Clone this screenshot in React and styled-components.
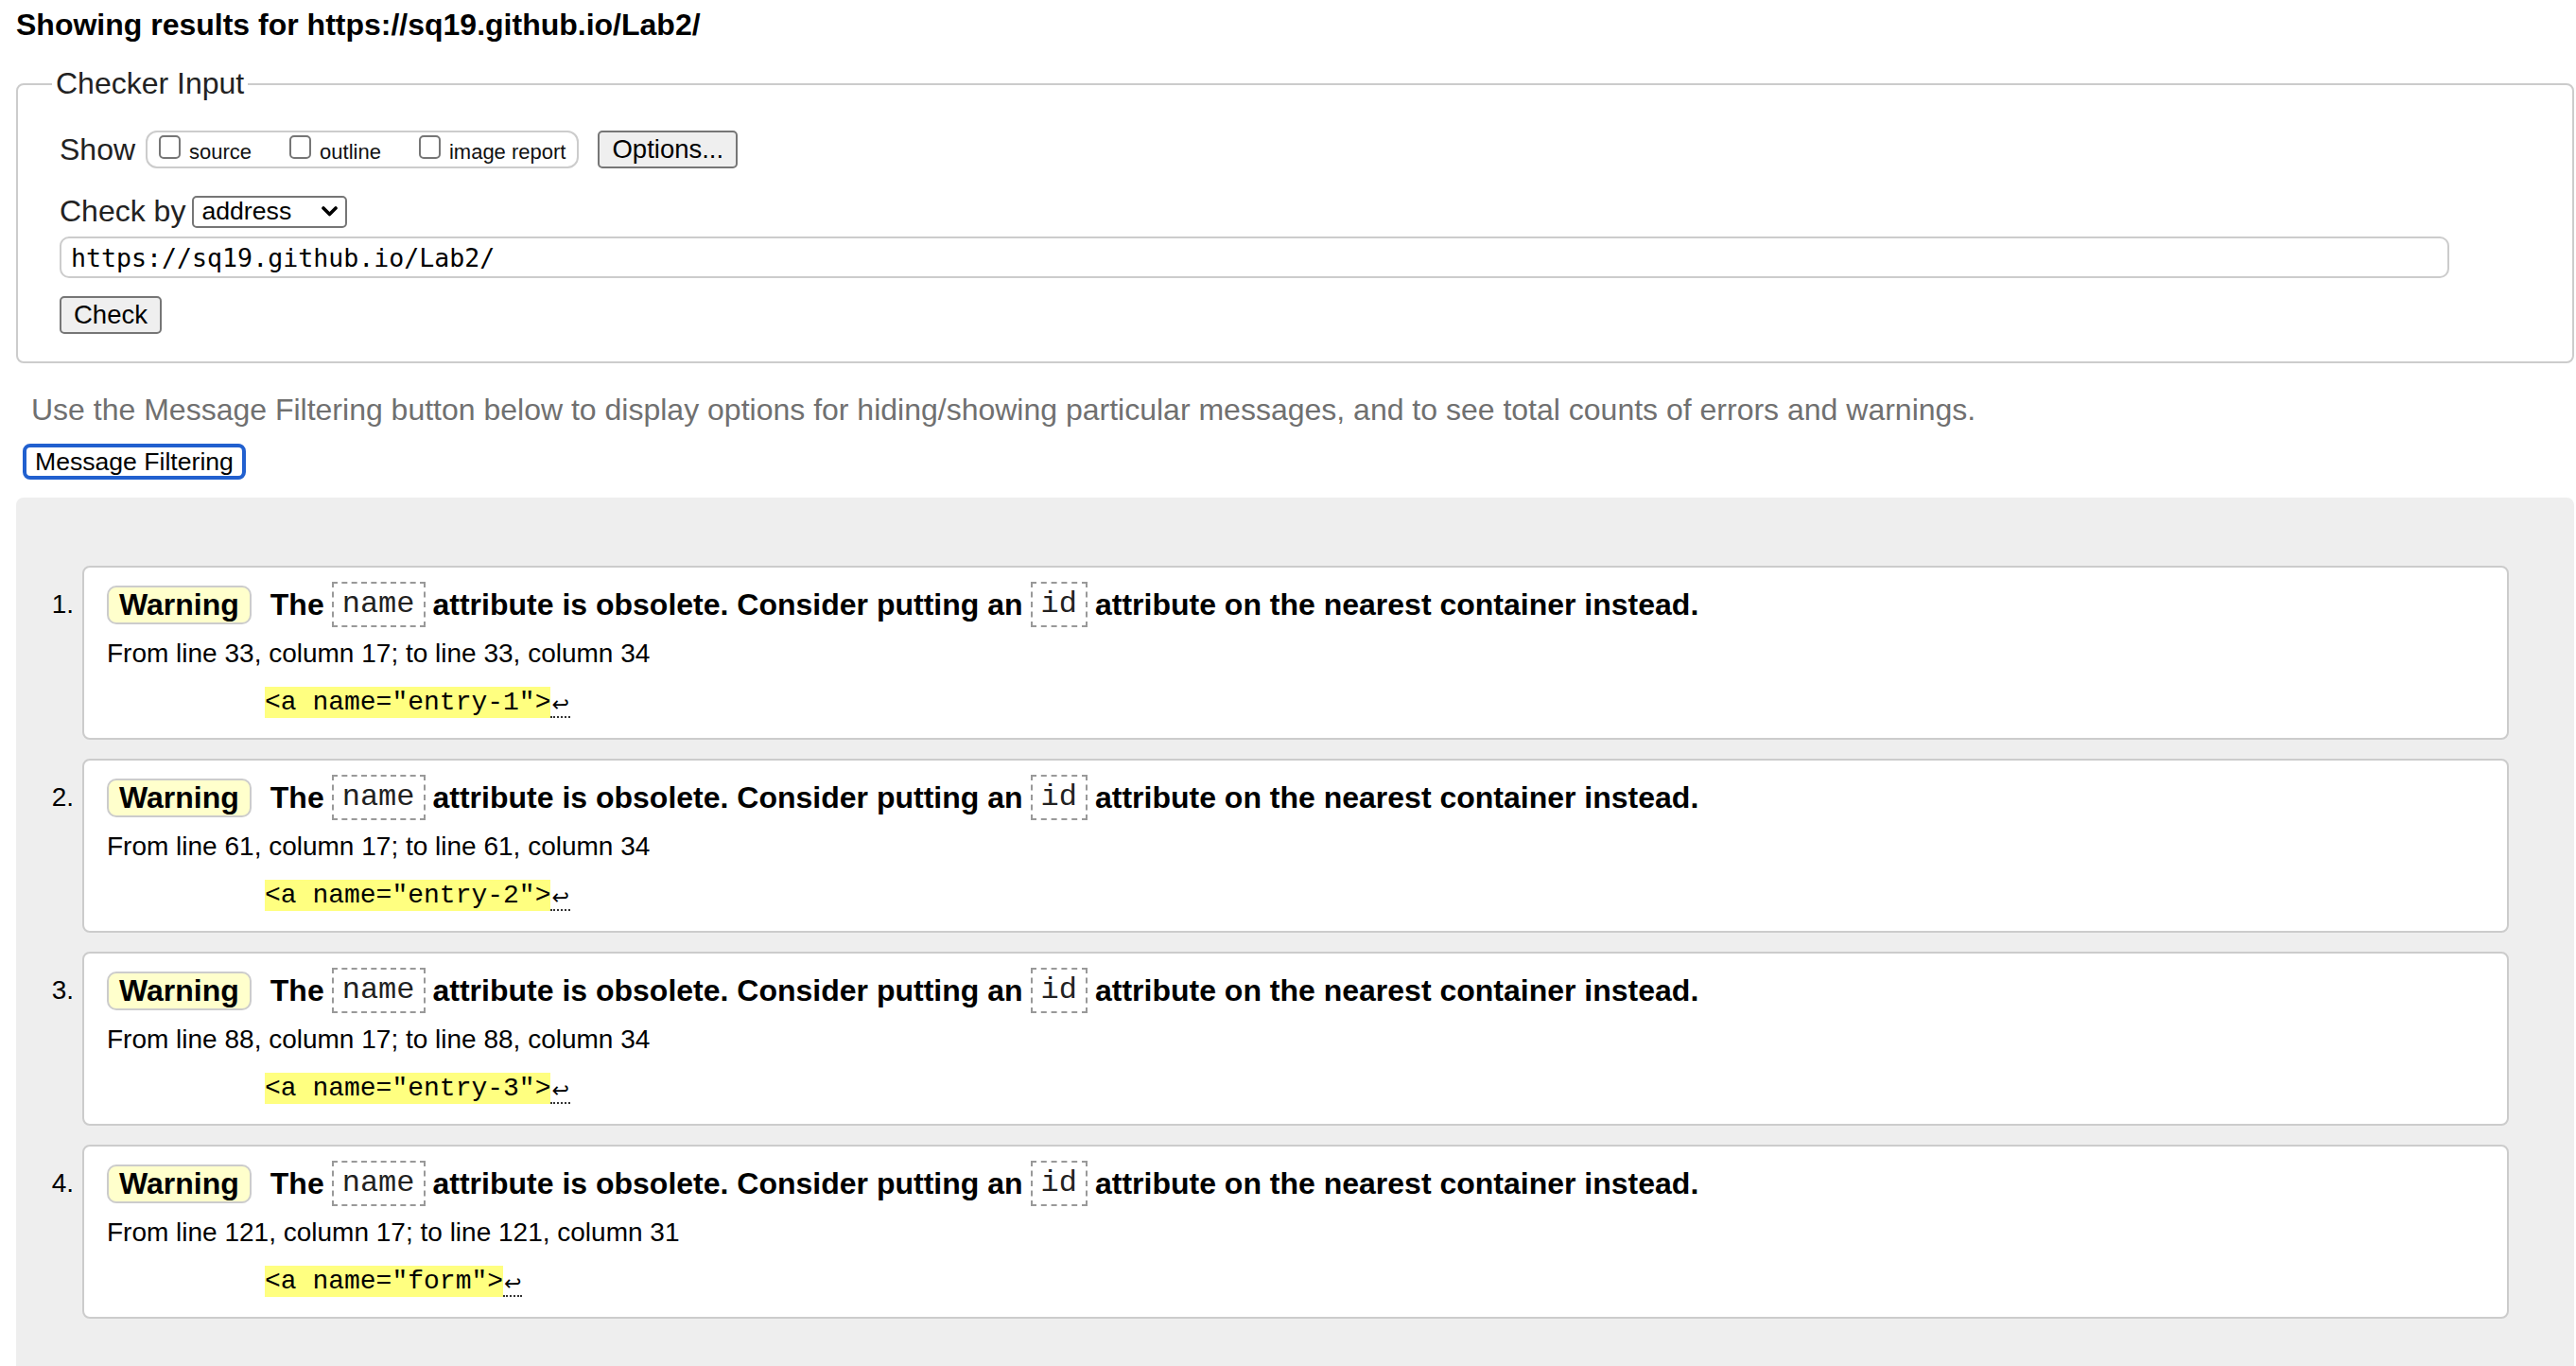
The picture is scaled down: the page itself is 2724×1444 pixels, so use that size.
import React from "react"
import styled, { createGlobalStyle } from "styled-components"

const GlobalStyle = createGlobalStyle`
  html, body {
    margin: 0;
    padding: 0;
    background: #fff;
  }
  body {
    font-family: "Liberation Sans", Arial, Helvetica, sans-serif;
    color: #000;
  }
`

const messages = [
  { line: 33, from: 17, to: 34, snippet: '<a name="entry-1">' },
  { line: 61, from: 17, to: 34, snippet: '<a name="entry-2">' },
  { line: 88, from: 17, to: 34, snippet: '<a name="entry-3">' },
  { line: 121, from: 17, to: 31, snippet: '<a name="form">' },
]

const App = () => {
  return (
    <Page>
      <GlobalStyle />
      <Title>Showing results for https://sq19.github.io/Lab2/</Title>

      <Checker>
        <Legend>Checker Input</Legend>
        <ShowRow>
          <FieldLabel>Show</FieldLabel>
          <OptionGroup>
            <Option>
              <Box type="checkbox" />
              source
            </Option>
            <Option>
              <Box type="checkbox" />
              outline
            </Option>
            <Option>
              <Box type="checkbox" />
              image report
            </Option>
          </OptionGroup>
          <Button $ml={20}>Options...</Button>
        </ShowRow>

        <CheckByRow>
          <FieldLabel>Check by</FieldLabel>
          <Select>
            <span>address</span>
            <svg width="17" height="11" viewBox="0 0 17 11">
              <polyline
                points="2,2 8.5,8.5 15,2"
                fill="none"
                stroke="#000"
                strokeWidth="3.6"
                strokeLinecap="round"
                strokeLinejoin="round"
              />
            </svg>
          </Select>
        </CheckByRow>

        <UrlInput readOnly value="https://sq19.github.io/Lab2/" />

        <Button $mt={19}>Check</Button>
      </Checker>

      <Hint>
        Use the Message Filtering button below to display options for
        hiding/showing particular messages, and to see total counts of errors
        and warnings.
      </Hint>
      <FilterButton>Message Filtering</FilterButton>

      <Results>
        <MessageList>
          {messages.map((m, i) => (
            <Item key={i}>
              <Num>{i + 1}.</Num>
              <Card>
                <Headline>
                  <Badge>Warning</Badge>
                  <span>The</span>
                  <Code>name</Code>
                  <span>attribute is obsolete. Consider putting an</span>
                  <Code>id</Code>
                  <span>attribute on the nearest container instead.</span>
                </Headline>
                <Location>
                  From line {m.line}, column {m.from}; to line {m.line}, column{" "}
                  {m.to}
                </Location>
                <Extract>
                  <Highlight>{m.snippet}</Highlight>
                  <Return>↩</Return>
                </Extract>
              </Card>
            </Item>
          ))}
        </MessageList>
      </Results>
    </Page>
  )
}

export default App

const Page = styled.div`
  padding: 0 2px 0 17px;
`

const Title = styled.h2`
  margin: 8px 0 0;
  font-size: 32px;
  line-height: 37px;
  font-weight: bold;
`

const Checker = styled.fieldset`
  margin: 25px 0 0;
  padding: 0 0 29px 44px;
  border: 2px solid #ccc;
  border-radius: 8px;
  min-width: 0;
`

const Legend = styled.legend`
  font-size: 32px;
  line-height: 37px;
  padding: 0 4px;
  margin-left: -8px;
  color: #222;
`

const ShowRow = styled.div`
  display: flex;
  align-items: center;
  margin-top: 30px;
  height: 42px;
`

const CheckByRow = styled.div`
  display: flex;
  align-items: center;
  margin-top: 26px;
`

const FieldLabel = styled.span`
  font-size: 32px;
  line-height: 37px;
  color: #222;
  margin-right: 9px;
`

const OptionGroup = styled.div`
  display: flex;
  align-items: center;
  gap: 40px;
  height: 40px;
  box-sizing: border-box;
  padding: 0 12px;
  margin-left: 2px;
  border: 2px solid #ccc;
  border-radius: 12px;
`

const Option = styled.label`
  display: flex;
  align-items: baseline;
  font-size: 22px;
  line-height: 26px;
  color: #111;
`

const Box = styled.input`
  appearance: none;
  -webkit-appearance: none;
  display: block;
  flex: 0 0 auto;
  width: 23px;
  height: 25px;
  margin: 0 9px 0 0;
  border: 2px solid #767676;
  border-radius: 5px;
  background: #fff;
  box-sizing: border-box;
`

const Button = styled.button`
  font-family: "Liberation Sans", Arial, sans-serif;
  font-size: 27.5px;
  line-height: 32px;
  padding: 2px 13px;
  margin: ${(p) => p.$mt || 0}px 0 0 ${(p) => p.$ml || 0}px;
  color: #000;
  background: #efefef;
  border: 2px solid #767676;
  border-radius: 5px;
  display: block;
`

const Select = styled.div`
  display: flex;
  align-items: center;
  justify-content: space-between;
  width: 164px;
  height: 34px;
  box-sizing: border-box;
  padding: 0 8px 0 8px;
  margin-left: -2px;
  font-size: 26.67px;
  border: 2px solid #767676;
  border-radius: 5px;
  background: #fff;
`

const UrlInput = styled.input`
  display: block;
  width: 2527px;
  height: 44px;
  box-sizing: border-box;
  margin-top: 8px;
  padding: 0 10px;
  font-family: "DejaVu Sans Mono", Menlo, monospace;
  font-size: 26.6px;
  color: #000;
  border: 2px solid #ccc;
  border-radius: 10px;
  outline: none;
`

const Hint = styled.p`
  margin: 31px 0 0 16px;
  font-size: 32px;
  line-height: 37px;
  color: #707070;
`

const FilterButton = styled.button`
  display: block;
  margin: 17px 0 0 7px;
  font-family: "Liberation Sans", Arial, sans-serif;
  font-size: 26.6px;
  line-height: 30px;
  padding: 0 9px;
  color: #000;
  background: #fff;
  border: 4px solid #2160cf;
  border-radius: 8px;
`

const Results = styled.div`
  margin-top: 19px;
  padding: 72px 69px 60px 0;
  background: #eee;
  border-radius: 8px 8px 0 0;
`

const MessageList = styled.ol`
  list-style: none;
  margin: 0;
  padding: 0;
`

const Item = styled.li`
  display: flex;
  align-items: flex-start;
  &:not(:last-child) {
    margin-bottom: 20px;
  }
`

const Num = styled.span`
  flex: 0 0 70px;
  box-sizing: border-box;
  padding: 25px 9px 0 0;
  text-align: right;
  font-size: 28px;
  line-height: 32px;
`

const Card = styled.div`
  flex: 1;
  padding: 15px 24px 21px;
  background: #fff;
  border: 2px solid #ccc;
  border-radius: 8px;
`

const Headline = styled.div`
  display: flex;
  align-items: center;
  gap: 8px;
  height: 48px;
  font-size: 32px;
  font-weight: bold;
  white-space: nowrap;
`

const Badge = styled.span`
  line-height: 37px;
  padding: 0 11px;
  margin-right: 12px;
  background: #ffffcc;
  border: 2px solid #ccc;
  border-radius: 10px;
`

const Code = styled.code`
  font-family: "Liberation Mono", "Courier New", monospace;
  font-size: 32px;
  font-weight: normal;
  line-height: 44px;
  padding: 0 9px;
  color: #222;
  border: 2px dashed #999;
`

const Location = styled.div`
  margin-top: 12px;
  font-size: 28px;
  line-height: 32px;
`

const Extract = styled.div`
  margin-top: 19px;
  padding-left: 167px;
  display: flex;
  align-items: flex-end;
`

const Highlight = styled.code`
  font-family: "Liberation Mono", "Courier New", monospace;
  font-size: 28px;
  line-height: 33px;
  background: #ffff80;
  white-space: pre;
`

const Return = styled.span`
  font-family: "DejaVu Sans", sans-serif;
  font-size: 22px;
  line-height: 24px;
  padding: 0 1px;
  border-bottom: 2px dotted #333;
`
